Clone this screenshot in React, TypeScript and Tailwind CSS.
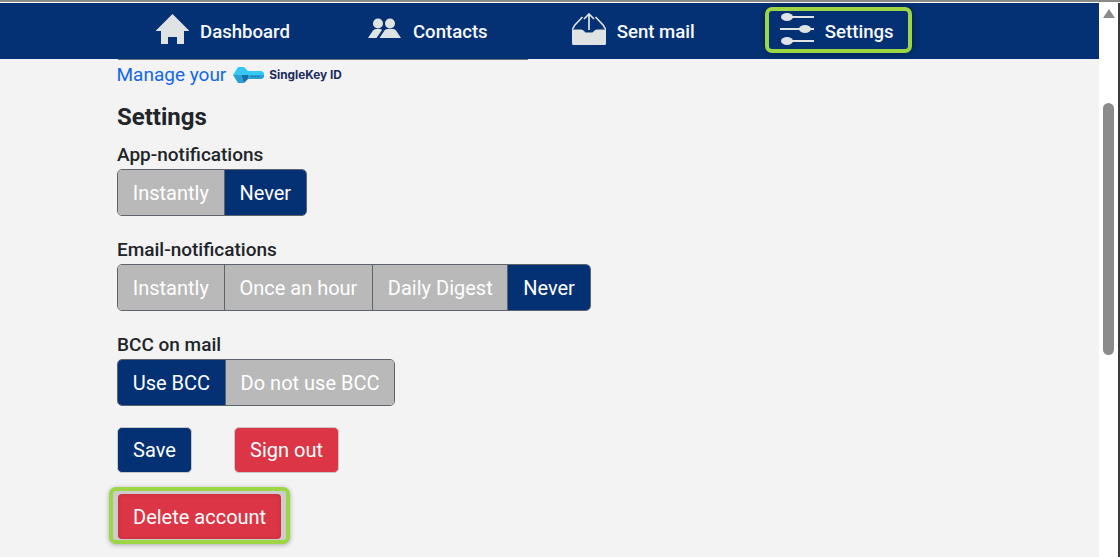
import React from 'react';

const NAVY = 'bg-[#043174]';

function HomeIcon() {
  return (
    <svg width="33" height="30" viewBox="0 0 33 30" fill="#dfe3e3">
      <path d="M16.5 0 L33 16.5 V17 H28 V30 H21 V23 H12 V30 H5 V17 H0 V16.5 Z" />
    </svg>
  );
}

function ContactsIcon() {
  return (
    <svg width="34" height="21" viewBox="0 0 34 21" fill="#dfe3e3">
      <circle cx="10" cy="5.5" r="5" />
      <circle cx="22" cy="5.5" r="5" />
      <path d="M0 20 L5 12.5 Q6 11 8 11 H12 Q13.5 11 14 12 L8.5 20 Z" />
      <path d="M11.5 20 L16.5 12.5 Q17.5 11 19 11 H25.5 Q27 11 28 12.5 L33 20 Z" />
    </svg>
  );
}

function SentIcon() {
  return (
    <svg width="34" height="32" viewBox="0 0 34 32" fill="none">
      <path d="M17 1.5 V17 M12 6 L17 1 L22 6" stroke="#dfe3e3" strokeWidth="1.7" />
      <path d="M2 13 L10.5 4 M32 13 L23.5 4" stroke="#dfe3e3" strokeWidth="1.7" />
      <path d="M0 16.5 H9 Q11 16.5 12 18 L13.5 19.5 H20.5 L22 18 Q23 16.5 25 16.5 H34 V30.5 Q34 32 32.5 32 H1.5 Q0 32 0 30.5 Z" fill="#dfe3e3" />
      <path d="M0 16.5 L2.5 13 M34 16.5 L31.5 13" stroke="#dfe3e3" strokeWidth="1.5" />
    </svg>
  );
}

function SlidersIcon() {
  return (
    <svg width="34" height="32" viewBox="0 0 34 32" fill="#dfe3e3">
      <rect x="7" y="3" width="27" height="2" />
      <ellipse cx="7" cy="4" rx="6" ry="4" />
      <rect x="0" y="15" width="34" height="2" />
      <ellipse cx="25" cy="16" rx="6" ry="4" />
      <rect x="7" y="27" width="27" height="2" />
      <ellipse cx="7" cy="28" rx="6" ry="4" />
    </svg>
  );
}

function SingleKeyLogo() {
  return (
    <span className="flex items-center gap-[5px]">
      <svg width="31" height="16" viewBox="0 0 31 16">
        <path d="M0 8 L5 0 H11 L15 4 H29 L31 6 V8 H0 Z" fill="#35c8f2" />
        <path d="M0 8 H8 L11 16 H5 Z" fill="#2a9fd4" />
        <path d="M8 8 H15 V12 L11 16 Z" fill="#1a6ea6" />
        <path d="M15 8 H31 V10 L29 12 H15 Z" fill="#2a9fd4" />
        <circle cx="19" cy="9.5" r="0.6" fill="#123a63" />
        <circle cx="22" cy="9.5" r="0.6" fill="#123a63" />
        <circle cx="25" cy="9.5" r="0.6" fill="#123a63" />
      </svg>
      <span className="mt-[2px] text-[11.8px] font-bold text-[#1b2a5c] font-['Inter',sans-serif]">SingleKey ID</span>
    </span>
  );
}

function NavItem({
  icon,
  label,
  highlighted = false
}: {
  icon: React.ReactNode;
  label: string;
  highlighted?: boolean;
}) {
  return (
    <div
      className={`flex items-center gap-[11px] ${
        highlighted
          ? '-mt-[2px] h-[46px] rounded-[7px] border-[4px] border-[#9cd644] pr-[14px] pl-[11px] shadow-[0_0_6px_rgba(0,0,0,0.4)]'
          : ''
      }`}
    >
      <span className={highlighted ? '-mt-[2px]' : '-mt-[4px]'}>{icon}</span>
      <span className={`text-[18.6px] font-medium text-[#f8f9fa] ${highlighted ? 'mt-[5px]' : 'mt-[4px]'}`}>
        {label}
      </span>
    </div>
  );
}

function Segmented({ options, active }: { options: string[]; active: string }) {
  return (
    <div className="flex h-[47px] w-fit overflow-hidden rounded-[5px] border border-[#5c636a]">
      {options.map((option, i) => (
        <div
          key={option}
          className={`flex items-center px-[14.75px] text-[20px] text-white ${
            option === active ? NAVY : 'bg-[#b9b9b9]'
          } ${i > 0 ? 'border-l border-[#5c636a]' : ''}`}
        >
          {option}
        </div>
      ))}
    </div>
  );
}

function Field({ label, options, active }: { label: string; options: string[]; active: string }) {
  return (
    <div>
      <p className="mb-[2px] h-[24px] text-[19px] leading-[24px] font-medium text-[#212529]">{label}</p>
      <Segmented options={options} active={active} />
    </div>
  );
}

export default function App() {
  return (
    <div className="flex h-[557px] w-[1120px] flex-col overflow-hidden bg-white font-['Roboto',sans-serif]">
      <div className="h-[3px] shrink-0 border-t-2 border-[#8a8a86] bg-white" />
      <div className="flex min-h-0 flex-1">
        <div className="flex min-w-0 flex-1 flex-col bg-[#f3f3f3]">
          <nav className={`flex h-[56px] shrink-0 items-center ${NAVY} pl-[156px]`}>
            <NavItem icon={<HomeIcon />} label="Dashboard" />
            <div className="ml-[78px]">
              <NavItem icon={<ContactsIcon />} label="Contacts" />
            </div>
            <div className="ml-[84px]">
              <NavItem icon={<SentIcon />} label="Sent mail" />
            </div>
            <div className="ml-[70px]">
              <NavItem icon={<SlidersIcon />} label="Settings" highlighted />
            </div>
          </nav>

          <main className="pl-[117px]">
            <div className="ml-px h-px w-[410px] bg-[#6c757d]" />
            <div className="mt-[3px] -ml-[0.5px] flex h-[24px] items-center gap-[7px]">
              <span className="text-[19px] text-[#1268e6]">Manage your</span>
              <SingleKeyLogo />
            </div>
            <h2 className="mt-[16px] h-[29px] text-[24px] leading-[29px] font-bold text-[#212529]">Settings</h2>
            <div className="mt-[11px] flex flex-col gap-[22px]">
              <Field label="App-notifications" options={['Instantly', 'Never']} active="Never" />
              <Field
                label="Email-notifications"
                options={['Instantly', 'Once an hour', 'Daily Digest', 'Never']}
                active="Never"
              />
              <Field label="BCC on mail" options={['Use BCC', 'Do not use BCC']} active="Use BCC" />
            </div>
            <div className="mt-[21px] flex gap-[42px]">
              <button className={`h-[46px] w-[75px] rounded-[5px] border border-[#c6c9cc] ${NAVY} text-[20px] text-white`}>
                Save
              </button>
              <button className="h-[46px] rounded-[5px] border border-[#c6c9cc] bg-[#dc3545] px-[15px] text-[20px] text-white">
                Sign out
              </button>
            </div>
            <div className="mt-[14px] -ml-[8px] w-fit rounded-[7px] border-[4px] border-[#9cd644] bg-[#cdcdcd] px-[5px] pt-[3px] pb-[1px] shadow-[0_1px_5px_rgba(0,0,0,0.3)]">
              <button className="block h-[45px] rounded-[4px] bg-[#dc3545] px-[15px] text-[20px] text-white shadow-[inset_0_0_4px_rgba(0,0,0,0.15)]">
                Delete account
              </button>
            </div>
          </main>
        </div>

        <div className="flex w-[19px] shrink-0 flex-col items-center bg-white pt-[6px]">
          <div className="h-0 w-0 border-x-[6px] border-b-[9px] border-x-transparent border-b-[#8b8b8b]" />
          <div className="mt-[85px] h-[252px] w-[11px] rounded-full bg-[#8b8b8b]" />
        </div>
        <div className="w-[2px] shrink-0 bg-[#3a3a3a]" />
      </div>
    </div>
  );
}
